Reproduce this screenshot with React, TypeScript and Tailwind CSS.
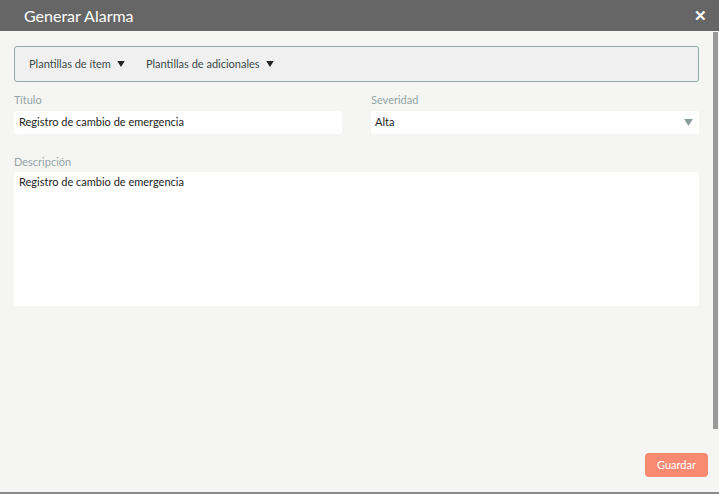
import React from "react";

function Tri({ w, h, color }: { w: number; h: number; color: string }) {
  return (
    <svg width={w} height={h} viewBox="0 0 10 8" className="block">
      <polygon points="0,0 10,0 5,8" fill={color} />
    </svg>
  );
}

export default function App() {
  const font = { fontFamily: 'Lato, "Open Sans", sans-serif' };
  return (
    <div className="w-[719px] h-[494px] flex flex-col bg-[#f5f5f3] overflow-hidden" style={font}>
      <div className="h-[31px] shrink-0 bg-[#666666] flex items-center justify-between pl-[24px] pr-[12px]">
        <span className="text-white text-[16px] leading-none">Generar Alarma</span>
        <span className="text-white text-[15px] font-bold leading-none">✕</span>
      </div>
      <div className="flex-1 flex">
        <div className="flex-1 flex flex-col pl-[14px] pr-[14px] pt-[15px]">
          <div className="h-[36px] border border-[#8fa9a8] rounded-[3px] bg-[#f0f0f0] flex items-center pl-[14px] gap-[21px] text-[11px] text-[#3d4a4a]">
            <span className="flex items-center gap-[6px]">Plantillas de ítem <Tri w={8} h={6} color="#222" /></span>
            <span className="flex items-center gap-[6px]">Plantillas de adicionales <Tri w={8} h={6} color="#222" /></span>
          </div>
          <div className="flex gap-[29px] mt-[9px]">
            <div className="w-[328px] flex flex-col">
              <label className="text-[11px] text-[#93a5a5] h-[20px] leading-[18px]">Título</label>
              <div className="h-[23px] bg-white rounded-[3px] flex items-center px-[5px] text-[11px] text-[#222]">Registro de cambio de emergencia</div>
            </div>
            <div className="flex-1 flex flex-col">
              <label className="text-[11px] text-[#93a5a5] h-[20px] leading-[18px]">Severidad</label>
              <div className="h-[23px] bg-white rounded-[3px] flex items-center justify-between pl-[4px] pr-[6px] text-[11px] text-[#222]">
                <span>Alta</span>
                <Tri w={9} h={7} color="#8a9c9c" />
              </div>
            </div>
          </div>
          <label className="text-[11px] text-[#93a5a5] mt-[19px] h-[19px] leading-[18px]">Descripción</label>
          <div className="h-[134px] bg-white rounded-[3px] px-[5px] pt-[2px] text-[11px] text-[#222]">Registro de cambio de emergencia</div>
          <div className="flex-1" />
          <div className="flex justify-end pb-[15px] -mr-[9px]">
            <button className="w-[63px] h-[24px] rounded-[4px] bg-[#f98a72] text-white text-[11px]">Guardar</button>
          </div>
        </div>
        <div className="w-[5px] mr-[1px] pt-[1px]">
          <div className="h-[397px] bg-[#999999]" />
        </div>
      </div>
      <div className="h-[2px] bg-[#8a8a8a] shrink-0" />
    </div>
  );
}
